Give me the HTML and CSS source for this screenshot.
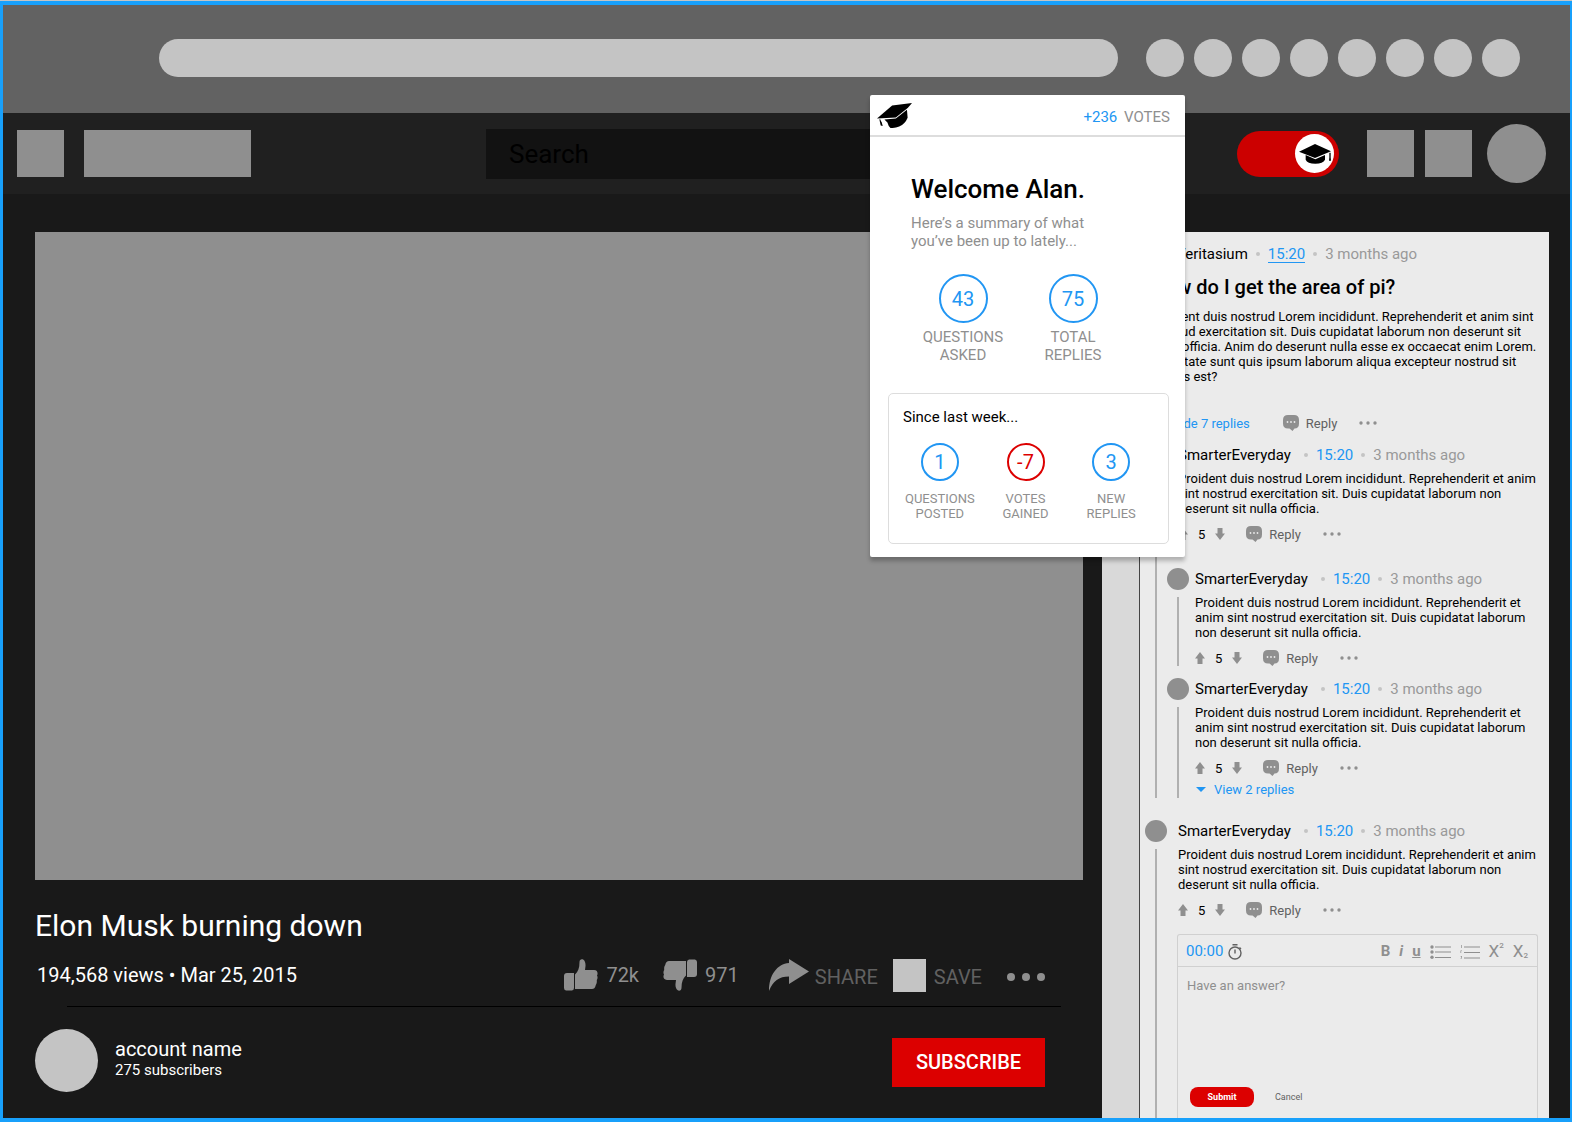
FILE: index.html
```html
<!DOCTYPE html>
<html lang="en">
<head>
    <meta charset="UTF-8">
    <meta name="viewport" content="width=device-width, initial-scale=1.0">
    <title>Elon Musk burning down</title>
    <link rel="stylesheet" href="styles.css">
</head>
<body>
    <!-- shared icons -->
    <svg class="sprite" aria-hidden="true">
        <symbol id="arrow" viewBox="0 0 10 12"><path d="M5 0L10 6.5H7.5V12H2.500V6.500H0z"/></symbol>
        <symbol id="chat" viewBox="0 0 16 16">
            <path d="M5 0H11Q16 0 16 5V8.500Q16 13.500 11.500 13.500L9.500 16L6.500 13.500H5Q0 13.500 0 8.500V5Q0 0 5 0z"/>
            <g fill="#ebebeb"><circle cx="4.500" cy="7" r="0.900"/><circle cx="8" cy="7" r="0.900"/><circle cx="11.500" cy="7" r="0.900"/></g>
        </symbol>
        <symbol id="dots" viewBox="0 0 18 4"><circle cx="2" cy="2" r="1.700"/><circle cx="9" cy="2" r="1.700"/><circle cx="16" cy="2" r="1.700"/></symbol>
        <symbol id="thumb" viewBox="0 0 34 32">
            <path d="M3 14H10V29Q10 31 8 31.500H2Q0 31 0 29V17Q0 14 3 14z"/>
            <path d="M11 30V15.500C14 13 15.500 9 15.500 3C15.500 -1 22 -1 21.500 7L21 11H30C34 11 34 15 33 16.500C34 18 33.500 20 32.800 21C33 24 32.500 25 31.800 26C31 29 30 30 28 30z"/>
        </symbol>
    </svg>

    <div class="page">
        <div class="browser-bar">
            <input class="address" type="text" aria-label="Address">
            <div class="extensions">
                <span></span><span></span><span></span><span></span><span></span><span></span><span></span><span></span>
            </div>
        </div>

        <header class="site-header">
            <div class="block"></div>
            <div class="block site-logo"></div>
            <input class="search" type="search" placeholder="Search" aria-label="Search">
            <label class="toggle">
                <input type="checkbox" checked aria-label="Study mode">
                <span class="knob">
                    <svg width="32" height="20" viewBox="0 0 96 60">
                        <path d="M0 23L48 0L96 22L48 42z"/>
                        <path d="M20 33L49 46L78 33V47Q72 59 49 59Q25 59 20 47z"/>
                        <path d="M91 26H95V40L96 50H90L91 40z"/>
                    </svg>
                </span>
            </label>
            <div class="header-blocks">
                <div class="block"></div>
                <div class="block"></div>
            </div>
            <div class="user"></div>
        </header>

        <main>
            <section class="watch">
                <div class="video"></div>
                <h1>Elon Musk burning down</h1>
                <div class="video-info">
                    <p>194,568 views • Mar 25, 2015</p>
                    <div class="video-actions">
                        <button class="like"><svg width="34" height="32"><use href="#thumb"/></svg>72k</button>
                        <button class="dislike"><svg width="34" height="32" viewBox="0 0 34 32"><use href="#thumb" width="34" height="32" transform="rotate(180 17 16)"/></svg>971</button>
                        <button class="share"><svg width="40" height="32" viewBox="0 0 40 32"><path d="M20 0L40 12.500L20 25V17.500C10 17.500 4 22 0 32C0 16 8 5 20 4z"/></svg><span>SHARE</span></button>
                        <button class="save"><span class="save-icon"></span><span>SAVE</span></button>
                        <button class="more" aria-label="More"><svg width="40" height="8" viewBox="0 0 40 8"><circle cx="5" cy="4" r="4"/><circle cx="20" cy="4" r="4"/><circle cx="35" cy="4" r="4"/></svg></button>
                    </div>
                </div>
                <hr>
                <div class="account">
                    <div class="account-avatar"></div>
                    <div class="account-text">
                        <div class="account-name">account name</div>
                        <div class="account-subs">275 subscribers</div>
                    </div>
                    <button class="subscribe">SUBSCRIBE</button>
                </div>
            </section>

            <aside class="panel">
                <article class="question">
                    <div class="meta">
                        <span class="avatar"></span>
                        <span class="name">Veritasium</span><i></i><a href="#" class="underlined">15:20</a><i></i><time>3 months ago</time>
                    </div>
                    <h2>How do I get the area of pi?</h2>
                    <p>Proident duis nostrud Lorem incididunt. Reprehenderit et anim sint nostrud exercitation sit. Duis cupidatat laborum non deserunt sit nulla officia. Anim do deserunt nulla esse ex occaecat enim Lorem. Voluptate sunt quis ipsum laborum aliqua excepteur nostrud sit laboris est?</p>
                    <div class="actions">
                        <a href="#" class="hide-replies">Hide 7 replies</a>
                        <button class="reply"><svg width="16" height="16"><use href="#chat"/></svg>Reply</button>
                        <button aria-label="More"><svg width="18" height="4"><use href="#dots"/></svg></button>
                    </div>
                </article>

                <article class="comment">
                    <div class="rail"><span class="avatar"></span></div>
                    <div class="content">
                        <div class="meta">
                            <span class="name">SmarterEveryday</span><i></i><a href="#">15:20</a><i></i><time>3 months ago</time>
                        </div>
                        <p>Proident duis nostrud Lorem incididunt. Reprehenderit et anim sint nostrud exercitation sit. Duis cupidatat laborum non deserunt sit nulla officia.</p>
                        <div class="actions">
                            <button aria-label="Vote up"><svg width="10" height="12"><use href="#arrow"/></svg></button>
                            <span class="score">5</span>
                            <button aria-label="Vote down"><svg class="down" width="10" height="12"><use href="#arrow"/></svg></button>
                            <button class="reply"><svg width="16" height="16"><use href="#chat"/></svg>Reply</button>
                            <button aria-label="More"><svg width="18" height="4"><use href="#dots"/></svg></button>
                        </div>

                        <div class="replies">
                            <article class="comment">
                                <div class="rail"><span class="avatar"></span></div>
                                <div class="content">
                                    <div class="meta">
                                        <span class="name">SmarterEveryday</span><i></i><a href="#">15:20</a><i></i><time>3 months ago</time>
                                    </div>
                                    <p>Proident duis nostrud Lorem incididunt. Reprehenderit et anim sint nostrud exercitation sit. Duis cupidatat laborum non deserunt sit nulla officia.</p>
                                    <div class="actions">
                                        <button aria-label="Vote up"><svg width="10" height="12"><use href="#arrow"/></svg></button>
                                        <span class="score">5</span>
                                        <button aria-label="Vote down"><svg class="down" width="10" height="12"><use href="#arrow"/></svg></button>
                                        <button class="reply"><svg width="16" height="16"><use href="#chat"/></svg>Reply</button>
                                        <button aria-label="More"><svg width="18" height="4"><use href="#dots"/></svg></button>
                                    </div>
                                </div>
                            </article>

                            <article class="comment">
                                <div class="rail"><span class="avatar"></span></div>
                                <div class="content">
                                    <div class="meta">
                                        <span class="name">SmarterEveryday</span><i></i><a href="#">15:20</a><i></i><time>3 months ago</time>
                                    </div>
                                    <p>Proident duis nostrud Lorem incididunt. Reprehenderit et anim sint nostrud exercitation sit. Duis cupidatat laborum non deserunt sit nulla officia.</p>
                                    <div class="actions">
                                        <button aria-label="Vote up"><svg width="10" height="12"><use href="#arrow"/></svg></button>
                                        <span class="score">5</span>
                                        <button aria-label="Vote down"><svg class="down" width="10" height="12"><use href="#arrow"/></svg></button>
                                        <button class="reply"><svg width="16" height="16"><use href="#chat"/></svg>Reply</button>
                                        <button aria-label="More"><svg width="18" height="4"><use href="#dots"/></svg></button>
                                    </div>
                                    <a href="#" class="view-replies"><svg width="10" height="5" viewBox="0 0 10 5"><path d="M0 0H10L5 5z"/></svg>View 2 replies</a>
                                </div>
                            </article>
                        </div>
                    </div>
                </article>

                <article class="comment last">
                    <div class="rail"><span class="avatar"></span></div>
                    <div class="content">
                        <div class="meta">
                            <span class="name">SmarterEveryday</span><i></i><a href="#">15:20</a><i></i><time>3 months ago</time>
                        </div>
                        <p>Proident duis nostrud Lorem incididunt. Reprehenderit et anim sint nostrud exercitation sit. Duis cupidatat laborum non deserunt sit nulla officia.</p>
                        <div class="actions">
                            <button aria-label="Vote up"><svg width="10" height="12"><use href="#arrow"/></svg></button>
                            <span class="score">5</span>
                            <button aria-label="Vote down"><svg class="down" width="10" height="12"><use href="#arrow"/></svg></button>
                            <button class="reply"><svg width="16" height="16"><use href="#chat"/></svg>Reply</button>
                            <button aria-label="More"><svg width="18" height="4"><use href="#dots"/></svg></button>
                        </div>

                        <form class="editor">
                            <div class="toolbar">
                                <span class="timestamp">00:00</span>
                                <svg class="stopwatch" width="14" height="16" viewBox="0 0 14 16" fill="none" stroke="#616161" stroke-width="1.400"><circle cx="7" cy="9" r="6"/><path d="M4.500 0.800H9.500M7 5.500V9.500M11.500 3.500L13 5"/></svg>
                                <div class="tools">
                                    <button type="button"><b>B</b></button>
                                    <button type="button"><b><em>i</em></b></button>
                                    <button type="button"><b><u>u</u></b></button>
                                    <button type="button" aria-label="Bulleted list">
                                        <svg width="21" height="14" viewBox="0 0 21 14"><path d="M5 1.500H21V2.500H5zM5 6.500H21V7.500H5zM5 12H21V13H5z"/><circle cx="2" cy="2" r="1.700"/><circle cx="2" cy="7" r="1.700"/><circle cx="2" cy="12.300" r="1.700"/></svg>
                                    </button>
                                    <button type="button" aria-label="Numbered list">
                                        <svg width="20" height="14" viewBox="0 0 20 14"><path d="M4 1.500H20V2.500H4zM4 7H20V8H4zM4 12.500H20V13.500H4z"/><path d="M1 0H1.700V3H1zM0.500 5.500H2V6H1.200V8H0.500zM0.500 11H2V13.500H0.500V13H1.300V11.500H0.500z"/></svg>
                                    </button>
                                    <button type="button" class="script">X<sup>2</sup></button>
                                    <button type="button" class="script">X<sub>2</sub></button>
                                </div>
                            </div>
                            <textarea placeholder="Have an answer?" aria-label="Answer"></textarea>
                            <div class="editor-buttons">
                                <button type="submit" class="submit">Submit</button>
                                <button type="button" class="cancel">Cancel</button>
                            </div>
                        </form>
                    </div>
                </article>
            </aside>
        </main>

        <!-- popup with the user's activity -->
        <section class="popup">
            <div class="popup-header">
                <svg width="35" height="25" viewBox="0 0 104 74">
                    <path d="M0 46L45 7L104 0L92 14L56 43z"/>
                    <path d="M22 49L56 46L89 20L91 44Q84 62 66 70Q54 75 40 74Q34 70 31 58z"/>
                    <path d="M7 48L10 49Q11 54 14 57L17 68L11 67L9 58z"/>
                </svg>
                <p><span>+236</span> VOTES</p>
            </div>
            <h2>Welcome Alan.</h2>
            <p class="summary">Here’s a summary of what<br>you’ve been up to lately...</p>
            <div class="stats totals">
                <div class="stat"><span class="ring">43</span>QUESTIONS<br>ASKED</div>
                <div class="stat"><span class="ring">75</span>TOTAL<br>REPLIES</div>
            </div>
            <div class="week">
                <h3>Since last week...</h3>
                <div class="stats">
                    <div class="stat"><span class="ring">1</span>QUESTIONS<br>POSTED</div>
                    <div class="stat"><span class="ring red">-7</span>VOTES<br>GAINED</div>
                    <div class="stat"><span class="ring">3</span>NEW<br>REPLIES</div>
                </div>
            </div>
        </section>
    </div>
</body>
</html>
```
FILE: styles.css
```css
* {
    box-sizing: border-box;
}
body {
    margin: 0;
    padding-top: 1px;
    background-color: #c4c4c4;
    color: #000;
    font-family: Roboto, "Liberation Sans", sans-serif;
    font-size: 13px;
    line-height: 15px;
}
h1, h2, h3, p {
    margin: 0;
    font-weight: 400;
}
button {
    display: flex;
    align-items: center;
    padding: 0;
    border: 0;
    background: none;
    color: inherit;
    font: inherit;
    cursor: pointer;
}
input, textarea {
    border: 0;
    outline: 0;
    font-family: inherit;
}
a {
    color: #2196f3;
    text-decoration: none;
}
svg {
    display: block;
    flex: none;
}
.sprite {
    position: absolute;
    width: 0;
    height: 0;
}
.page {
    position: relative;
    display: flex;
    flex-direction: column;
    min-height: calc(100vh - 1px);
    border: 4px solid #18a0fb;
    border-left-width: 3px;
    border-right-width: 2px;
    background-color: #191919;
}

/* browser bar */
.browser-bar {
    display: flex;
    align-items: center;
    gap: 28px;
    height: 108px;
    padding: 0 50px 2px 156px;
    background-color: #626262;
}
.address {
    flex: 1;
    height: 38px;
    padding: 0 20px;
    border-radius: 19px;
    background-color: #c4c4c4;
}
.extensions {
    display: flex;
    gap: 10px;
}
.extensions span {
    width: 38px;
    height: 38px;
    border-radius: 50%;
    background-color: #c4c4c4;
}

/* site header */
.site-header {
    display: flex;
    align-items: center;
    height: 81px;
    padding: 0 24px 0 14px;
    background-color: #202020;
}
.block {
    width: 47px;
    height: 47px;
    background-color: #8f8f8f;
}
.site-logo {
    width: 167px;
    margin-left: 20px;
}
.search {
    flex: 1;
    height: 50px;
    margin: 0 120px 0 235px;
    padding: 0 23px;
    background-color: #121212;
    color: #000;
    font-size: 26px;
}
.search::placeholder {
    color: #000;
}
.toggle {
    display: flex;
    align-items: center;
    justify-content: flex-end;
    width: 102px;
    height: 46px;
    padding-right: 5px;
    border-radius: 23px;
    background-color: #cc0000;
    cursor: pointer;
}
.toggle input {
    width: 0;
    height: 0;
    margin: 0;
    appearance: none;
}
.knob {
    display: flex;
    align-items: center;
    justify-content: center;
    width: 39px;
    height: 39px;
    border-radius: 50%;
    background-color: #fff;
}
.header-blocks {
    display: flex;
    gap: 11px;
    margin: 0 15px 0 28px;
}
.user {
    width: 59px;
    height: 59px;
    border-radius: 50%;
    background-color: #8f8f8f;
}

main {
    flex: 1;
    display: grid;
    grid-template-columns: 1fr 447px;
    gap: 19px;
    padding: 38px 21px 0 32px;
}

/* video column */
.watch {
    color: #fff;
}
.video {
    aspect-ratio: 1048 / 648;
    background-color: #8f8f8f;
}
h1 {
    margin-top: 28px;
    font-size: 30px;
    line-height: 36px;
}
.video-info {
    display: flex;
    align-items: center;
    justify-content: space-between;
    margin-top: 12px;
    padding: 0 37px 0 2px;
    font-size: 20px;
    line-height: 34px;
}
.video-actions {
    display: flex;
    align-items: center;
    color: #8f8f8f;
    fill: #8f8f8f;
}
.like, .dislike {
    gap: 8px;
    margin-right: 24px;
}
.share {
    gap: 6px;
    margin: 0 15px 0 6px;
    color: #616161;
}
.save {
    gap: 8px;
    margin-right: 24px;
    color: #616161;
}
.share span, .more {
    padding-top: 4px;
}
.save span + span {
    padding-top: 4px;
}
.save-icon {
    width: 33px;
    height: 33px;
    background-color: #c4c4c4;
}
hr {
    margin: 12px 22px 22px 32px;
    border: 0;
    border-top: 1px solid #000;
}
.account {
    display: flex;
    align-items: center;
    padding-right: 38px;
}
.account-avatar {
    width: 63px;
    height: 63px;
    border-radius: 50%;
    background-color: #c4c4c4;
}
.account-text {
    flex: 1;
    padding: 0 0 4px 17px;
}
.account-name {
    font-size: 20px;
    line-height: 23px;
}
.account-subs {
    font-size: 15px;
    line-height: 18px;
}
.subscribe {
    justify-content: center;
    width: 153px;
    height: 49px;
    margin-top: 3px;
    background-color: #dc0000;
    font-size: 20px;
    font-weight: 500;
}

/* questions panel */
.panel {
    display: flex;
    flex-direction: column;
    padding: 11px 11px 0 5px;
    border-left: 1px solid #444;
    margin-left: 37px;
    background-color: #ebebeb;
    box-shadow: -37px 0 #d9d9d9;
}
.avatar {
    width: 22px;
    height: 22px;
    border-radius: 50%;
    background-color: #8f8f8f;
}
.meta {
    display: flex;
    align-items: center;
    gap: 8px;
    height: 22px;
    font-size: 15px;
    line-height: 22px;
}
.meta i {
    width: 4px;
    height: 4px;
    border-radius: 50%;
    background-color: #c4c4c4;
}
.meta time {
    color: #999;
}
.meta .underlined {
    border-bottom: 1px solid #2196f3;
    line-height: 16px;
}
.question {
    margin: 0 0 13px 6px;
}
.question .avatar {
    margin-right: -5px;
}
.question h2 {
    margin: 10px 0;
    font-size: 20px;
    font-weight: 500;
    line-height: 24px;
}
.question .actions {
    margin-top: 31px;
}
.hide-replies {
    margin: 0 12px 0 20px;
}
.comment {
    display: flex;
    gap: 11px;
}
.comment .name {
    margin-right: 5px;
}
.comment p {
    margin-top: 5px;
}
.rail {
    display: flex;
    flex-direction: column;
    align-items: center;
    gap: 7px;
}
.rail::after {
    content: "";
    flex: 1;
    width: 2px;
    background-color: #b0b0b0;
}
.content {
    flex: 1;
}
.actions {
    display: flex;
    align-items: center;
    gap: 10px;
    height: 16px;
    margin-top: 10px;
    color: #616161;
    fill: #8f8f8f;
}
.score {
    color: #000;
}
.down {
    transform: rotate(180deg);
}
.reply {
    gap: 7px;
    margin: 0 12px 0 11px;
}
.replies {
    display: flex;
    flex-direction: column;
    gap: 12px;
    margin: 26px 0 0 -11px;
}
.replies .comment {
    gap: 6px;
}
.view-replies {
    display: flex;
    align-items: center;
    gap: 8px;
    height: 16px;
    margin-top: 6px;
    padding: 0 0 2px 1px;
    fill: #2196f3;
}
.last {
    flex: 1;
    margin-top: 22px;
}
.last .content {
    display: flex;
    flex-direction: column;
}

/* answer editor */
.editor {
    flex: 1;
    margin: 16px 0 0 -1px;
    border: 1px solid #d0d0d0;
    border-bottom: 0;
    border-radius: 3px 3px 0 0;
}
.toolbar {
    display: flex;
    align-items: center;
    gap: 5px;
    height: 32px;
    padding: 2px 9px 0 8px;
    border-bottom: 1px solid #d0d0d0;
}
.timestamp {
    color: #2196f3;
    font-size: 15px;
}
.tools {
    display: flex;
    align-items: center;
    gap: 9px;
    margin-left: auto;
    color: #8f8f8f;
    fill: #8f8f8f;
    font-size: 15px;
}
.tools button {
    height: 20px;
}
.tools .script {
    font-size: 17px;
}
.tools sup, .tools sub {
    font-size: 8px;
    font-weight: 500;
    line-height: 8px;
}
.tools sup {
    align-self: flex-start;
}
.tools sub {
    align-self: flex-end;
    padding-bottom: 2px;
}
textarea {
    display: block;
    width: 100%;
    height: 120px;
    padding: 11px 9px;
    background: none;
    font-size: 13px;
    line-height: 15px;
    resize: none;
}
textarea::placeholder {
    color: #8f8f8f;
}
.editor-buttons {
    display: flex;
    gap: 21px;
    padding: 0 12px 11px;
    font-size: 9px;
}
.submit {
    justify-content: center;
    width: 64px;
    height: 20px;
    border-radius: 8px;
    background-color: #dc0000;
    color: #fff;
    font-weight: 700;
}
.cancel {
    color: #616161;
}

/* activity popup, floats over the page */
.popup {
    position: absolute;
    top: 90px;
    right: 385px;
    width: 315px;
    padding-bottom: 13px;
    border-radius: 2px;
    background-color: #fff;
    box-shadow: 0 4px 4px rgba(0, 0, 0, 0.25);
    font-size: 15px;
    line-height: 18px;
}
.popup-header {
    display: flex;
    align-items: center;
    justify-content: space-between;
    height: 42px;
    padding: 0 15px 0 7px;
    border-bottom: 2px solid #ddd;
    color: #8f8f8f;
}
.popup-header p {
    padding-top: 4px;
}
.popup-header span {
    margin-right: 3px;
    color: #2196f3;
}
.popup h2 {
    margin: 37px 0 0 41px;
    font-size: 26px;
    font-weight: 500;
    line-height: 30px;
}
.summary {
    margin: 10px 0 0 41px;
    color: #8f8f8f;
}
.stats {
    display: flex;
    color: #8f8f8f;
    text-align: center;
}
.stat {
    flex: 1;
}
.ring {
    display: flex;
    align-items: center;
    justify-content: center;
    width: 38px;
    height: 38px;
    margin: 0 auto 10px;
    border: 2px solid #2196f3;
    border-radius: 50%;
    color: #2196f3;
    font-size: 20px;
}
.ring.red {
    border-color: #dc0000;
    color: #dc0000;
}
.totals {
    margin: 24px 57px 29px 38px;
}
.totals .ring {
    width: 49px;
    height: 49px;
    margin-bottom: 5px;
}
.week {
    margin: 0 16px 0 18px;
    padding: 14px 14px 22px 8px;
    border: 1px solid #ddd;
    border-radius: 5px;
    font-size: 13px;
    line-height: 15px;
}
.week h3 {
    margin: 0 0 17px 6px;
    font-size: 15px;
    line-height: 18px;
}
```
